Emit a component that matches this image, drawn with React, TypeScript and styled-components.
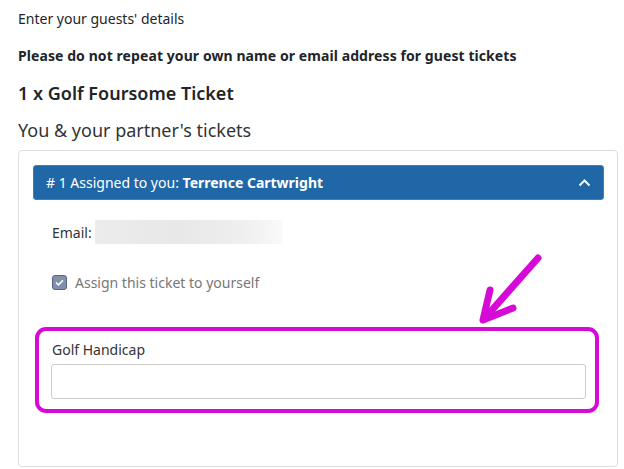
import React from "react";
import styled, { createGlobalStyle } from "styled-components";

const GlobalStyle = createGlobalStyle`
  html, body {
    margin: 0;
    padding: 0;
    background: #fff;
  }
  body {
    font-family: "Noto Sans", "Open Sans", Arial, sans-serif;
    color: #212529;
  }
`;

const Page = styled.div`
  position: relative;
  width: 624px;
  height: 469px;
  overflow: hidden;
  padding: 9px 6px 0 18px;
  box-sizing: border-box;
`;

const Intro = styled.p`
  margin: 0 0 18px;
  font-size: 14px;
  line-height: 19px;
`;

const Warning = styled.p`
  margin: 0 0 16px;
  font-size: 14px;
  font-weight: 700;
  line-height: 19px;
  letter-spacing: 0.08px;
`;

const TicketTitle = styled.h3`
  margin: 0 0 12px;
  font-size: 18px;
  font-weight: 600;
  line-height: 25px;
`;

const SectionTitle = styled.h4`
  margin: 0 0 7px;
  font-size: 18px;
  font-weight: 400;
  line-height: 25px;
  color: #333;
`;

const Panel = styled.div`
  border: 1px solid #ddd;
  border-radius: 4px;
  padding: 14px 13px 0 14px;
  height: 317px;
  box-sizing: border-box;
`;

const AccordionHeader = styled.div`
  display: flex;
  align-items: center;
  justify-content: space-between;
  height: 35px;
  padding: 0 12px;
  background: #1f67a7;
  border: 1px solid #3b7fbf;
  border-radius: 3px;
  color: #fff;
  font-size: 14px;
  box-sizing: border-box;
`;

const Name = styled.strong`
  font-weight: 700;
`;

const Body = styled.div`
  padding: 20px 0 0 0;
`;

const Row = styled.div`
  display: flex;
  align-items: center;
  gap: 3px;
  padding-left: 19px;
  font-size: 14px;
  color: #333;
`;

const Redacted = styled.span`
  display: block;
  width: 188px;
  height: 24px;
  background: linear-gradient(90deg, #ececec 0%, #e8e8e8 45%, #efefef 80%, #fafafa 100%);
`;

const CheckRow = styled(Row)`
  margin-top: 29px;
  gap: 8px;
  color: #777;
`;

const Check = styled.span`
  display: flex;
  align-items: center;
  justify-content: center;
  width: 15px;
  height: 15px;
  box-sizing: border-box;
  border: 1.5px solid #56647f;
  border-radius: 3px;
  background: #8390aa;
`;

const Highlight = styled.div`
  margin: 35px 5px 0 2px;
  border: 4px solid #d60ad6;
  border-radius: 11px;
  padding: 9px 9px 10px 12px;
`;

const FieldLabel = styled.label`
  display: block;
  font-size: 14px;
  line-height: 19px;
  color: #333;
  margin: 0 0 5px 1px;
`;

const TextInput = styled.input`
  display: block;
  width: 100%;
  height: 35px;
  box-sizing: border-box;
  border: 1px solid #ccc;
  border-radius: 3px;
  background: #fff;
`;

const ArrowSvg = styled.svg`
  position: absolute;
  left: 470px;
  top: 245px;
`;

export default function App() {
  return (
    <Page>
      <GlobalStyle />
      <Intro>Enter your guests' details</Intro>
      <Warning>Please do not repeat your own name or email address for guest tickets</Warning>
      <TicketTitle>1 x Golf Foursome Ticket</TicketTitle>
      <SectionTitle>You &amp; your partner's tickets</SectionTitle>
      <Panel>
        <AccordionHeader>
          <span>
            # 1 Assigned to you: <Name>Terrence Cartwright</Name>
          </span>
          <svg width="13" height="9" viewBox="0 0 13 9">
            <path d="M1.5 7.5 L6.5 2.5 L11.5 7.5" fill="none" stroke="#fff" strokeWidth="2" />
          </svg>
        </AccordionHeader>
        <Body>
          <Row>
            Email: <Redacted />
          </Row>
          <CheckRow>
            <Check>
              <svg width="9" height="7" viewBox="0 0 9 7">
                <path d="M1 3.5 L3.4 5.8 L8 1.2" fill="none" stroke="#fff" strokeWidth="1.6" />
              </svg>
            </Check>
            Assign this ticket to yourself
          </CheckRow>
          <Highlight>
            <FieldLabel>Golf Handicap</FieldLabel>
            <TextInput type="text" />
          </Highlight>
        </Body>
      </Panel>
      <ArrowSvg width="80" height="85" viewBox="0 0 80 85">
        <g fill="none" stroke="#d60ad6" strokeWidth="7" strokeLinecap="round" strokeLinejoin="round">
          <path d="M68 13 L14 74" />
          <path d="M20 45 L13 75 L43 63" />
        </g>
      </ArrowSvg>
    </Page>
  );
}
